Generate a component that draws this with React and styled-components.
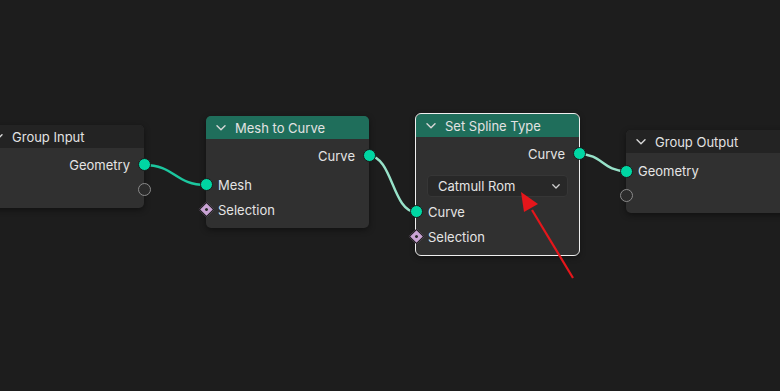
import styled, { createGlobalStyle } from "styled-components";

const GlobalStyle = createGlobalStyle`
  html, body {
    margin: 0;
    padding: 0;
    background: #1d1d1d;
  }
  body {
    font-family: "Inter", "Noto Sans", sans-serif;
    -webkit-font-smoothing: antialiased;
  }
`;

const links = [
  { from: [144, 165], to: [206, 185], color: "#1cc79f", width: 2.6 },
  { from: [369, 156], to: [416, 212], color: "#97e2c9", width: 2.4 },
  { from: [579, 154], to: [626, 171], color: "#97e2c9", width: 2.4 },
];

function linkPath([x1, y1], [x2, y2]) {
  const d = Math.max(20, (x2 - x1) * 0.5);
  return `M${x1} ${y1} C${x1 + d} ${y1}, ${x2 - d} ${y2}, ${x2} ${y2}`;
}

function Chevron() {
  return (
    <ChevronIcon viewBox="0 0 10 6">
      <path d="M1 0.8 L5 4.8 L9 0.8" />
    </ChevronIcon>
  );
}

function NodeHeader({ title, green }) {
  return (
    <Header $green={green}>
      <Chevron />
      <span>{title}</span>
    </Header>
  );
}

export default function App() {
  return (
    <>
      <GlobalStyle />
      <Canvas>
        <Links viewBox="0 0 780 391">
          {links.map((l, i) => (
            <path
              key={i}
              d={linkPath(l.from, l.to)}
              stroke={l.color}
              strokeWidth={l.width}
              fill="none"
              strokeLinecap="round"
            />
          ))}
        </Links>

        <Node $x={-17} $y={125} $w={161}>
          <NodeHeader title="Group Input" />
          <Body>
            <Row $out>
              Geometry
              <Socket $side="right" />
            </Row>
            <Row $out>
              <Socket $side="right" $empty />
            </Row>
          </Body>
        </Node>

        <Node $x={206} $y={116} $w={163}>
          <NodeHeader title="Mesh to Curve" green />
          <Body>
            <Row $out>
              Curve
              <Socket $side="right" />
            </Row>
            <Spacer />
            <Row>
              <Socket $side="left" />
              Mesh
            </Row>
            <Row>
              <Diamond />
              Selection
            </Row>
          </Body>
        </Node>

        <Node $x={416} $y={114} $w={163} $selected>
          <NodeHeader title="Set Spline Type" green />
          <Body>
            <Row $out>
              Curve
              <Socket $side="right" />
            </Row>
            <Dropdown>
              <span>Catmull Rom</span>
              <DropChevron viewBox="0 0 8 5">
                <path d="M0.8 0.8 L4 4 L7.2 0.8" />
              </DropChevron>
            </Dropdown>
            <Row>
              <Socket $side="left" />
              Curve
            </Row>
            <Row>
              <Diamond />
              Selection
            </Row>
          </Body>
        </Node>

        <Node $x={626} $y={130} $w={170}>
          <NodeHeader title="Group Output" />
          <Body $top={6}>
            <Row $tight>
              <Socket $side="left" />
              Geometry
            </Row>
            <Row $tight>
              <Socket $side="left" $empty />
            </Row>
          </Body>
        </Node>

        <Arrow viewBox="0 0 780 391">
          <line x1="573" y1="278" x2="532" y2="210" stroke="#e5161b" strokeWidth="2.2" />
          <polygon points="521,192 538,204 524,212" fill="#e5161b" />
        </Arrow>
      </Canvas>
    </>
  );
}

const Canvas = styled.div`
  position: relative;
  width: 780px;
  height: 391px;
  overflow: hidden;
  background-color: #1d1d1d;
`;

const Links = styled.svg`
  position: absolute;
  inset: 0;
  width: 780px;
  height: 391px;
  z-index: 0;
`;

const Arrow = styled.svg`
  position: absolute;
  inset: 0;
  width: 780px;
  height: 391px;
  z-index: 5;
  pointer-events: none;
`;

const Node = styled.div`
  position: absolute;
  left: ${(p) => p.$x}px;
  top: ${(p) => p.$y}px;
  width: ${(p) => p.$w}px;
  z-index: 1;
  display: flex;
  flex-direction: column;
  background-color: #303030;
  border-radius: 5px;
  box-shadow: 0 2px 6px rgba(0, 0, 0, 0.45);
  outline: ${(p) => (p.$selected ? "1px solid #efefef" : "none")};
`;

const Header = styled.div`
  height: 23px;
  display: flex;
  align-items: center;
  gap: 9px;
  padding-left: 10px;
  background-color: ${(p) => (p.$green ? "#1f6e5b" : "#232323")};
  border-radius: 5px 5px 0 0;
  color: #e2e2e2;
  font-size: 13px;
  white-space: nowrap;
`;

const ChevronIcon = styled.svg`
  width: 10px;
  height: 6px;
  flex-shrink: 0;
  fill: none;
  stroke: #d8d8d8;
  stroke-width: 1.4;
  stroke-linecap: round;
  stroke-linejoin: round;
`;

const Body = styled.div`
  display: flex;
  flex-direction: column;
  padding: ${(p) => p.$top ?? 4}px 0 6px;
`;

const Row = styled.div`
  position: relative;
  height: ${(p) => (p.$tight ? 24 : 25)}px;
  display: flex;
  align-items: center;
  justify-content: ${(p) => (p.$out ? "flex-end" : "flex-start")};
  padding: 0 ${(p) => (p.$out ? 14 : 0)}px 0 ${(p) => (p.$out ? 0 : 12)}px;
  color: #e4e4e4;
  font-size: 13px;
  white-space: nowrap;
`;

const Spacer = styled.div`
  height: 4px;
`;

const Socket = styled.div`
  position: absolute;
  top: 50%;
  ${(p) => (p.$side === "right" ? "right: -6.5px;" : "left: -6.5px;")}
  width: 11px;
  height: 11px;
  margin-top: -6.5px;
  border-radius: 50%;
  background-color: ${(p) => (p.$empty ? "#2b2b2b" : "#00d6a3")};
  border: 1px solid ${(p) => (p.$empty ? "#8a8a8a" : "#1a1a1a")};
`;

const Diamond = styled.div`
  position: absolute;
  top: 50%;
  left: -5.5px;
  width: 9px;
  height: 9px;
  margin-top: -5.5px;
  transform: rotate(45deg);
  background-color: #c9a3d4;
  border: 1px solid #1a1a1a;

  &::after {
    content: "";
    position: absolute;
    left: 3px;
    top: 3px;
    width: 3px;
    height: 3px;
    border-radius: 50%;
    background-color: #2a2a2a;
  }
`;

const Dropdown = styled.div`
  margin: 9px 11px 2px;
  height: 22px;
  box-sizing: border-box;
  display: flex;
  align-items: center;
  justify-content: space-between;
  padding: 0 7px 0 10px;
  background-color: #282828;
  border: 1px solid #363636;
  border-radius: 4px;
  color: #e4e4e4;
  font-size: 13px;
`;

const DropChevron = styled.svg`
  width: 8px;
  height: 5px;
  fill: none;
  stroke: #d0d0d0;
  stroke-width: 1.3;
  stroke-linecap: round;
  stroke-linejoin: round;
`;
